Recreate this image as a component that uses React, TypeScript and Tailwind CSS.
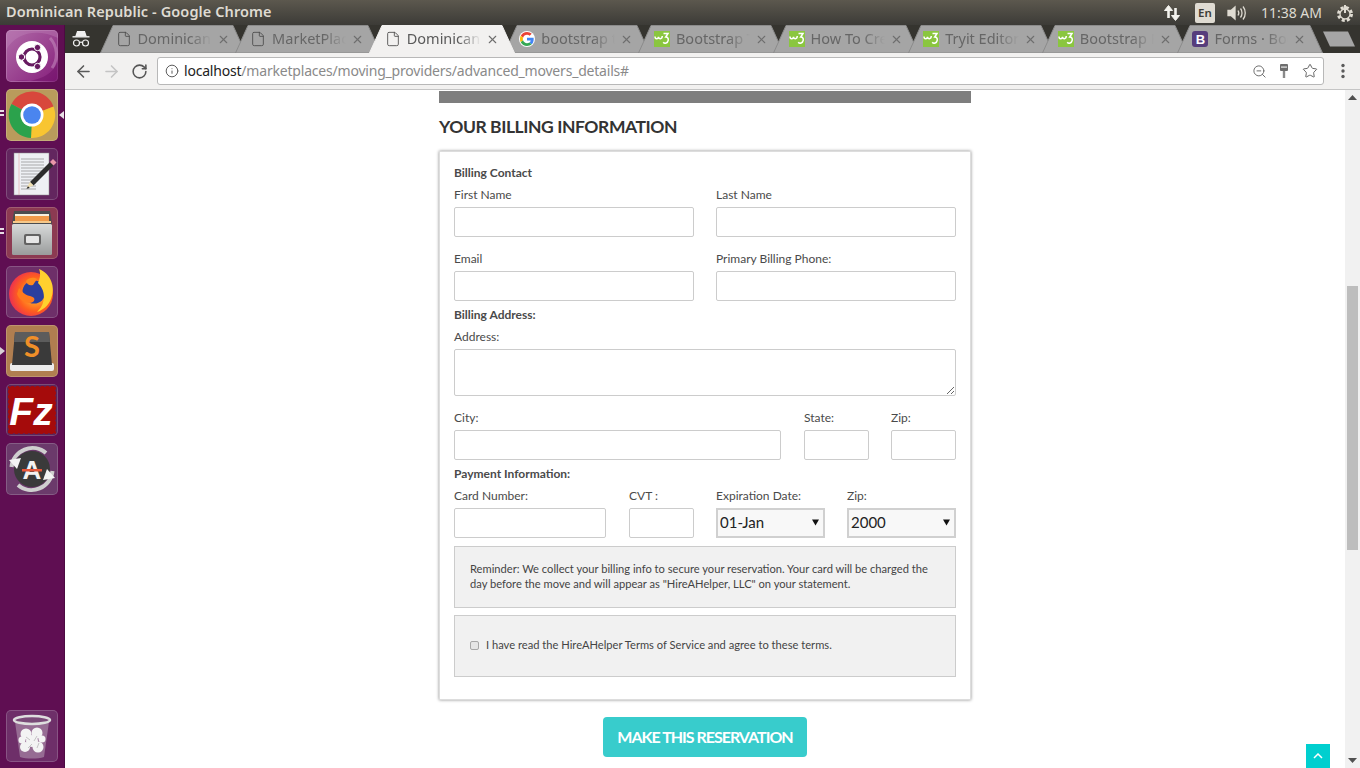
import React from "react";
import { ArrowLeft, ArrowRight, RotateCw, Info, ZoomOut, Star, X, File } from "lucide-react";

const uiFont = "font-['Noto_Sans','Open_Sans',sans-serif]";

function GoogleG() {
  return (
    <span className="w-4 h-4 rounded-full bg-white flex items-center justify-center shrink-0">
      <svg viewBox="0 0 48 48" width="14" height="14">
        <path fill="#EA4335" d="M24 9.500c3.500 0 6.700 1.200 9.200 3.600l6.900-6.900C35.900 2.400 30.400 0 24 0 14.600 0 6.500 5.400 2.600 13.200l8 6.200C12.500 13.700 17.800 9.500 24 9.500z" />
        <path fill="#4285F4" d="M46.900 24.500c0-1.600-.1-3.100-.4-4.500H24v9h12.900c-.6 3-2.200 5.500-4.700 7.200l7.700 6c4.500-4.200 7-10.300 7-17.700z" />
        <path fill="#FBBC05" d="M10.500 28.600c-.5-1.500-.8-3-.8-4.600s.3-3.200.8-4.600l-8-6.200C.9 16.500 0 20.100 0 24s.9 7.500 2.600 10.800l7.900-6.200z" />
        <path fill="#34A853" d="M24 48c6.500 0 11.900-2.100 15.900-5.800l-7.700-6c-2.100 1.400-4.900 2.300-8.200 2.300-6.200 0-11.500-4.200-13.400-9.900l-8 6.200C6.500 42.600 14.600 48 24 48z" />
      </svg>
    </span>
  );
}

function W3Icon() {
  return (
    <span className="w-4 h-4 bg-[#8ac63f] flex items-center justify-center shrink-0">
      <svg viewBox="0 0 16 16" width="16" height="16" fill="none" stroke="#fff" strokeWidth="1.500">
        <path d="M1 5.500c0 3 3.200 3 3.500 .3.300 2.700 3.500 2.700 3.800 -.8" />
        <path d="M9.500 2.500h4.500l-2.300 3.500c2.300 0 2.800 1.700 2.500 3.300-.5 2.700-3.500 3.700-5 1.900" />
      </svg>
    </span>
  );
}

function BootIcon() {
  return (
    <span className="w-4 h-4 rounded-[3px] bg-[#563d7c] flex items-center justify-center shrink-0 text-white text-[13px] font-bold leading-none font-['Liberation_Sans',sans-serif]">
      B
    </span>
  );
}

function DocIcon() {
  return <File size={16} strokeWidth={1.300} className="text-[#4a4a4a] shrink-0" />;
}

type TabData = { title: string; icon: React.ReactNode; active?: boolean };
const tabs: TabData[] = [
  { title: "Dominican Republic", icon: <DocIcon /> },
  { title: "MarketPlaces", icon: <DocIcon /> },
  { title: "Dominican Republic", icon: <DocIcon />, active: true },
  { title: "bootstrap tutorial", icon: <GoogleG /> },
  { title: "Bootstrap Tutorial", icon: <W3Icon /> },
  { title: "How To Create", icon: <W3Icon /> },
  { title: "Tryit Editor v3.5", icon: <W3Icon /> },
  { title: "Bootstrap Forms", icon: <W3Icon /> },
  { title: "Forms · Bootstrap", icon: <BootIcon /> },
];

function Tab({ title, icon, active }: TabData) {
  return (
    <div className={`relative w-[146px] h-[28px] -mr-[11.400px] shrink-0 ${active ? "z-10" : ""}`}>
      <svg className="absolute inset-0" width="146" height="28">
        <polygon
          points="0.5,28 13,0.5 133,0.5 145.500,28"
          fill={active ? "#f2f1f0" : "#a5a5a5"}
          stroke={active ? "#f2f1f0" : "#8b8b8b"}
        />
      </svg>
      <div className="relative h-full flex items-center pl-[15.500px]">
        {icon}
        <span
          className={`ml-[6px] w-[74px] whitespace-nowrap overflow-hidden text-[14.500px] [mask-image:linear-gradient(to_right,black_70%,transparent)] ${
            active ? "text-[#5a5a5a]" : "text-[#666666]"
          }`}
        >
          {title}
        </span>
        <X size={13} strokeWidth={2} className="ml-[5px] text-[#6e6e6e] shrink-0" />
      </div>
    </div>
  );
}

function Tile({ bg, children, left, right }: { bg: string; children: React.ReactNode; left?: "pips" | "arrow"; right?: boolean }) {
  return (
    <div className={`relative w-[52px] h-[52px] rounded-[5px] ${bg} shadow-[inset_0_0_0_1px_rgba(255,255,255,0.18)]`}>
      <svg viewBox="0 0 52 52" width="52" height="52" className="absolute inset-0 rounded-[5px]">
        {children}
      </svg>
      {left === "pips" && (
        <div className="absolute left-[-6px] top-[21px] flex flex-col gap-[2px]">
          <span className="w-[4px] h-[2px] bg-[#e8e0e6]" />
          <span className="w-[4px] h-[2px] bg-[#e8e0e6]" />
        </div>
      )}
      {left === "arrow" && (
        <svg className="absolute left-[-6px] top-[22px]" width="5" height="8" viewBox="0 0 5 8">
          <polygon points="0,0 5,4 0,8" fill="#d8d0d6" />
        </svg>
      )}
      {right && (
        <svg className="absolute left-[53px] top-[22px]" width="5" height="8" viewBox="0 0 5 8">
          <polygon points="5,0 0,4 5,8" fill="#e8e0e6" />
        </svg>
      )}
    </div>
  );
}

function Launcher() {
  return (
    <aside className="w-[65px] shrink-0 h-full bg-[#5f0e52] border-r border-[#4c0a42] flex flex-col items-start pl-[6px] pt-[5px]">
      <div className="flex flex-col gap-[7px]">
        <Tile bg="bg-gradient-to-br from-[#b06aa8] to-[#861a7c]">
          <path d="M0 20C10 2 32-2 52 8V0H0Z" fill="#c48abc" opacity=".35" />
          <path d="M52 30C48 46 28 54 8 50l44 2Z" fill="#6e0f66" opacity=".5" />
          <path d="M44 8a24 24 0 0 1 2 30" fill="none" stroke="#d0a0ca" strokeWidth="3" opacity=".45" />
          <circle cx="26" cy="27" r="16" fill="#fff" />
          <circle cx="26" cy="27" r="8" fill="none" stroke="#671a60" strokeWidth="3.200" />
          <circle cx="15.500" cy="27" r="3.200" fill="#671a60" stroke="#fff" strokeWidth="1" />
          <circle cx="31.500" cy="17.500" r="3.200" fill="#671a60" stroke="#fff" strokeWidth="1" />
          <circle cx="31.500" cy="36.500" r="3.200" fill="#671a60" stroke="#fff" strokeWidth="1" />
        </Tile>
        <Tile bg="bg-[#b99b5c]" left="pips" right>
          <path d="M5.500 15A23 23 0 0 1 47.500 17.500L26 26Z" fill="#d8483c" />
          <path d="M47.500 17.500A23 23 0 0 1 25 49L26 26Z" fill="#f8c531" />
          <path d="M25 49A23 23 0 0 1 5.500 15L26 26Z" fill="#2ba24c" />
          <circle cx="26" cy="26" r="11.500" fill="#fff" />
          <circle cx="26" cy="26" r="8.800" fill="#4a85ef" />
        </Tile>
        <Tile bg="bg-[#63265f]">
          <rect x="8" y="5" width="35" height="42" fill="#eef0f4" stroke="#8a8a8a" strokeWidth=".5" />
          <line x1="13" y1="5" x2="13" y2="47" stroke="#e3a4a4" strokeWidth=".6" />
          {[11, 14, 17, 20, 23, 26, 29, 32, 35, 38, 41].map((y) => (
            <line key={y} x1="15" y1={y} x2={y > 26 ? 30 : 38} y2={y} stroke="#8a8a8a" strokeWidth=".7" />
          ))}
          <path d="M44 14l3.500 3.500-20 20-3.500-3.500Z" fill="#2c2c2c" />
          <path d="M44 14l3-3 3.500 3.500-3 3Z" fill="#e896a8" />
          <path d="M24 34l3.500 3.500-7 2.500Z" fill="#f0e0b0" />
          <path d="M22 38.200l1.800 1.800-3.300 .8Z" fill="#222" />
        </Tile>
        <Tile bg="bg-[#8c3a52]" left="pips">
          <path d="M8 4h36l2 13H6Z" fill="#4a4c4f" />
          <rect x="9" y="7" width="34" height="2" fill="#f4f0e0" />
          <rect x="9" y="9" width="34" height="5" fill="#ef9a4a" />
          <rect x="7" y="14" width="38" height="2" fill="#f5c88a" />
          <defs>
            <linearGradient id="cab" x1="0" y1="0" x2="0" y2="1">
              <stop offset="0" stopColor="#d8dada" />
              <stop offset="1" stopColor="#9a9c9c" />
            </linearGradient>
          </defs>
          <rect x="6" y="17" width="40" height="31" rx="1.500" fill="url(#cab)" />
          <rect x="18" y="27" width="17" height="11" rx="2" fill="#636363" />
          <rect x="20" y="29" width="13" height="7" rx="1" fill="#e6e6e6" />
        </Tile>
        <Tile bg="bg-[#6e2f69]">
          <defs>
            <radialGradient id="ff" cx="0.6" cy="0.5" r="0.65">
              <stop offset="0.1" stopColor="#ffc22e" />
              <stop offset="0.6" stopColor="#ff5f1e" />
              <stop offset="1" stopColor="#e8245c" />
            </radialGradient>
          </defs>
          <circle cx="25" cy="28" r="22" fill="url(#ff)" />
          <circle cx="28" cy="26" r="11.500" fill="#2b3f9e" />
          <path d="M33 3c12 5 17 18 12 30-3 7-8 11-14 13 8-7 10-20 1-29 2-5 3-9 1-14Z" fill="#ffd12e" />
          <path d="M13 22c3 3 5 7 11 8 4 1 6 3 3 6-6 3-14-2-16-8Z" fill="#ff7a1e" />
          <path d="M20 15c3-4 8-4 11-2l-4 6c-3 1-6 0-7-4Z" fill="#ff8a1e" />
        </Tile>
        <Tile bg="bg-[#b07e50]" left="arrow">
          <rect x="4" y="38" width="44" height="8" rx="2" fill="#ececec" />
          <path d="M9 7h34l3 33H6Z" fill="#3a3a3a" />
          <path d="M9 7h34l1 10H8Z" fill="#5c5c5c" />
          <text x="26" y="32" textAnchor="middle" fontFamily="Lato, sans-serif" fontSize="29" fontWeight="700" fill="#f08f28">S</text>
        </Tile>
        <Tile bg="bg-[#5c2559]">
          <rect x="2" y="2" width="48" height="48" rx="1" fill="#a50b0b" />
          <rect x="2" y="2" width="48" height="48" rx="1" fill="none" stroke="#5c2559" strokeWidth="1.500" strokeDasharray="2 3" />
          <text x="25" y="41" textAnchor="middle" fontFamily="Liberation Sans, sans-serif" fontSize="39" fontStyle="italic" fontWeight="700" fill="#fff">Fz</text>
        </Tile>
        <Tile bg="bg-[#6b3a6b]">
          <path d="M5.500 24A21 21 0 0 1 40 10" fill="none" stroke="#cfcfcf" strokeWidth="4" />
          <path d="M46.500 28A21 21 0 0 1 12 42" fill="none" stroke="#cfcfcf" strokeWidth="4" />
          <circle cx="26" cy="26" r="18" fill="#3a3a3a" />
          <text x="26" y="36" textAnchor="middle" fontFamily="Liberation Sans, sans-serif" fontSize="26" fontWeight="700" fill="#f2f2f2">A</text>
          <rect x="16" y="26" width="20" height="2.500" fill="#e8563a" />
          <path d="M3 17l12-2-4 11Z" fill="#f4f4f4" />
          <path d="M49 35l-12 2 4-11Z" fill="#f4f4f4" />
        </Tile>
      </div>
      <div className="mt-auto mb-[6px]">
        <Tile bg="bg-[#6e2f69]">
          <path d="M9 12l5 35c6 2 18 2 24 0l5-35Z" fill="#a07c9e" opacity=".8" />
          <ellipse cx="26" cy="10" rx="18" ry="4" fill="#7a4a78" stroke="#dedede" strokeWidth="2.500" />
          <g fill="#f3f3f3">
            <circle cx="20" cy="24" r="5.500" />
            <circle cx="31" cy="23" r="5.500" />
            <circle cx="26" cy="31" r="6" />
            <circle cx="19" cy="37" r="5" />
            <circle cx="32" cy="37" r="5.500" />
            <circle cx="36" cy="29" r="3.500" />
            <circle cx="16" cy="30" r="3.500" />
          </g>
          <path d="M20 27l4 3M31 26l-3 5M22 38l4-4M33 33l-2 5" stroke="#c4c4c4" strokeWidth="1" fill="none" />
        </Tile>
      </div>
    </aside>
  );
}

function TopPanel() {
  return (
    <header className="h-[25px] shrink-0 bg-gradient-to-b from-[#5c584e] to-[#3c3b37] flex items-center pl-[6px] pr-[5px]">
      <span className="-mt-[1px] text-[14.500px] font-semibold tracking-[0.1px] text-[#dfdbd2] whitespace-nowrap">Dominican Republic - Google Chrome</span>
      <div className="ml-auto flex items-center text-[#dfdbd2]">
        <svg width="18" height="18" viewBox="0 0 18 18" fill="none" stroke="#f4f3ee" strokeWidth="2.600">
          <path d="M5.500 14V3" />
          <path d="M1.500 6.500L5.500 1.500l4 5Z" fill="#f4f3ee" strokeWidth="1" />
          <path d="M12.500 4v11" />
          <path d="M8.500 11.500l4 5 4-5Z" fill="#f4f3ee" strokeWidth="1" />
        </svg>
        <span className="ml-[14px] w-[20px] h-[20px] rounded-[2px] bg-[#dfdbd2] text-[#3c3b37] text-[11.500px] font-semibold flex items-center justify-center">En</span>
        <svg className="ml-[12px]" width="20" height="16" viewBox="0 0 20 16" fill="none" stroke="#dfdbd2" strokeWidth="1.300">
          <path d="M1 5.500h3L8 2v12l-4-3.500H1Z" fill="#dfdbd2" />
          <path d="M11 5.500c1 1.500 1 3.500 0 5M13.500 3.500c2 2.500 2 6.500 0 9M16 1.500c3 3.500 3 9.500 0 13" />
        </svg>
        <span className="ml-[14px] text-[14px] whitespace-nowrap">11:38 AM</span>
        <svg className="ml-[13px]" width="20" height="20" viewBox="0 0 20 20" fill="none" stroke="#dfdbd2">
          <circle cx="10" cy="11" r="6.500" strokeDasharray="3 2.100" strokeWidth="3" />
          <circle cx="10" cy="11" r="5" strokeWidth="1.300" />
          <path d="M10 2v8" strokeWidth="2" />
        </svg>
      </div>
    </header>
  );
}

function Incognito() {
  return (
    <svg width="20" height="18" viewBox="0 0 20 18" className="shrink-0" fill="none" stroke="#f0f0f0" strokeWidth="1.200">
      <path d="M5 6l1.500-4.500h7L15 6Z" fill="#f0f0f0" />
      <path d="M1.500 6.800h17" strokeWidth="1.400" />
      <circle cx="5.500" cy="13" r="3" />
      <circle cx="14.500" cy="13" r="3" />
      <path d="M8.500 12.500c1-.6 2-.6 3 0" />
    </svg>
  );
}

function TabStrip() {
  return (
    <div className="h-[28px] shrink-0 bg-[#35342f] flex items-end relative overflow-hidden">
      <div className="w-[35px] shrink-0 h-full flex items-center pl-[6px]">
        <Incognito />
      </div>
      {tabs.map((t, i) => (
        <Tab key={i} {...t} />
      ))}
      <svg className="ml-[12px] shrink-0 mb-[6px]" width="32" height="16" viewBox="0 0 32 16">
        <polygon points="0,0.5 25,0.5 32,15.500 7,15.500" fill="#a5a5a5" />
      </svg>
    </div>
  );
}

function Toolbar() {
  return (
    <div className="h-[37px] shrink-0 bg-[#f2f1f0] border-b border-[#c5c5c5] flex items-center">
      <ArrowLeft size={19} strokeWidth={2} className="ml-[9px] text-[#5a5a5a] shrink-0" />
      <ArrowRight size={19} strokeWidth={2} className="ml-[9px] text-[#c4c4c4] shrink-0" />
      <RotateCw size={17} strokeWidth={2.200} className="ml-[10px] text-[#555555] shrink-0" />
      <div className="ml-[9px] w-[1167px] h-[28px] rounded-[3px] bg-white border border-[#b8b8b8] flex items-center shrink-0">
        <Info size={14} strokeWidth={1.700} className="ml-[7px] text-[#5a5a5a] shrink-0" />
        <span className="ml-[5px] -mt-[1px] text-[14px] tracking-[-0.2px] whitespace-nowrap text-[#8a8a8a]">
          <span className="text-[#222222]">localhost</span>/marketplaces/moving_providers/advanced_movers_details#
        </span>
        <div className="ml-auto flex items-center pr-[5px]">
          <ZoomOut size={15} strokeWidth={1.500} className="text-[#666666]" />
          <svg className="ml-[11px]" width="12" height="16" viewBox="0 0 12 16">
            <rect x="2" y="1" width="8" height="7" rx="1" fill="#6e6e6e" />
            <rect x="4.800" y="8" width="2.400" height="7" fill="#8a8a8a" />
            <rect x="3" y="3.500" width="6" height="1.200" fill="#e8e8e8" />
          </svg>
          <Star size={16} strokeWidth={1.500} className="ml-[12px] text-[#666666]" />
        </div>
      </div>
      <svg className="ml-[17px]" width="4" height="16" viewBox="0 0 4 16" fill="#5a5a5a">
        <circle cx="2" cy="2.500" r="1.700" />
        <circle cx="2" cy="8" r="1.700" />
        <circle cx="2" cy="13.500" r="1.700" />
      </svg>
    </div>
  );
}

const labelCls = "block h-[22px] mb-[1px] leading-[22px] text-[12px] text-[#4a4a4a] whitespace-nowrap";
const headCls = "h-[22px] leading-[22px] text-[12px] font-bold text-[#4a4a4a] whitespace-nowrap";
const inputCls = "block w-full h-[30px] bg-white border border-[#cccccc] rounded-[2px]";
const selectCls = "block w-full h-[30px] appearance-none bg-[#f8f8f8] border-2 border-[#d0d0d0] text-[15px] text-[#222222] pl-[2px] pb-[1px]";

function Field({ label, w, children }: { label: string; w: string; children?: React.ReactNode }) {
  return (
    <div className={`${w} shrink-0`}>
      <span className={labelCls}>{label}</span>
      {children ?? <input className={inputCls} />}
    </div>
  );
}

function Select({ value }: { value: string }) {
  return (
    <div className="relative">
      <select className={selectCls} defaultValue={value}>
        <option>{value}</option>
      </select>
      <svg className="absolute right-[6px] top-[11px] pointer-events-none" width="7" height="7" viewBox="0 0 7 7">
        <polygon points="0,0.5 7,0.5 3.500,6.500" fill="#111111" />
      </svg>
    </div>
  );
}

function Card() {
  return (
    <div className="w-[532px] h-[549px] bg-white border border-[#dddddd] shadow-[0_0_3px_rgba(0,0,0,0.45)] pt-[10px] px-[14px]">
      <div className={headCls}>Billing Contact</div>
      <div className="flex gap-[22px]">
        <Field label="First Name" w="w-[240px]" />
        <Field label="Last Name" w="w-[240px]" />
      </div>
      <div className="flex gap-[22px] mt-[11px]">
        <Field label="Email" w="w-[240px]" />
        <Field label="Primary Billing Phone:" w="w-[240px]" />
      </div>
      <div className={`${headCls} mt-[3px]`}>Billing Address:</div>
      <Field label="Address:" w="w-full">
        <textarea className="block w-full h-[47px] bg-white border border-[#cccccc] rounded-[2px]" />
      </Field>
      <div className="flex gap-[22px] mt-[11px]">
        <Field label="City:" w="w-[327px] mr-[1px]" />
        <Field label="State:" w="w-[65px]" />
        <Field label="Zip:" w="w-[65px]" />
      </div>
      <div className={`${headCls} mt-[3px]`}>Payment Information:</div>
      <div className="flex gap-[22px]">
        <Field label="Card Number:" w="w-[152px] mr-[1px]" />
        <Field label="CVT :" w="w-[65px]" />
        <Field label="Expiration Date:" w="w-[109px]">
          <Select value="01-Jan" />
        </Field>
        <Field label="Zip:" w="w-[109px]">
          <Select value="2000" />
        </Field>
      </div>
      <div className="mt-[8px] h-[62px] bg-[#f1f1f1] border border-[#cccccc] flex items-center pl-[15px] pr-[15px] pb-[2px]">
        <p className="text-[11.150px] leading-[15px] text-[#444444]">
          Reminder: We collect your billing info to secure your reservation. Your card will be charged the day before the move and will appear as "HireAHelper, LLC" on your statement.
        </p>
      </div>
      <div className="mt-[7px] h-[62px] bg-[#f1f1f1] border border-[#cccccc] flex items-center pl-[15px] pb-[2px]">
        <span className="w-[9px] h-[9px] rounded-[2px] border border-[#a8a8a8] bg-[#e6e6e6] shrink-0" />
        <span className="ml-[7px] text-[11.150px] text-[#444444] whitespace-nowrap">
          I have read the HireAHelper Terms of Service and agree to these terms.
        </span>
      </div>
    </div>
  );
}

function Scrollbar() {
  return (
    <div className="w-[15px] shrink-0 h-full bg-[#f1f1f1] flex flex-col items-center">
      <svg className="mt-[5px] shrink-0" width="9" height="5" viewBox="0 0 9 5"><polygon points="4.500,0 9,5 0,5" fill="#505050" /></svg>
      <div className="w-[11px] h-[264px] bg-[#bdbdbd] mt-[186px] shrink-0" />
      <svg className="mt-auto mb-[5px] shrink-0" width="9" height="5" viewBox="0 0 9 5"><polygon points="0,0 9,0 4.500,5" fill="#505050" /></svg>
    </div>
  );
}

export default function App() {
  return (
    <div className={`w-[1360px] h-[768px] overflow-hidden flex flex-col ${uiFont}`}>
      <TopPanel />
      <div className="flex-1 min-h-0 flex">
        <Launcher />
        <div className="flex-1 min-w-0 flex flex-col">
          <TabStrip />
          <Toolbar />
          <div className="flex-1 min-h-0 flex bg-white">
            <main className="flex-1 min-w-0 relative font-['Lato',sans-serif]">
              <div className="ml-[374px] w-[532px] h-[12px] bg-[#7e7e7e] mt-[1px]" />
              <h2 className="ml-[374px] mt-[12px] h-[24px] leading-[24px] text-[17.500px] tracking-[-0.43px] font-bold text-[#333333] whitespace-nowrap">
                YOUR BILLING INFORMATION
              </h2>
              <div className="ml-[374px] mt-[12px]">
                <Card />
              </div>
              <div className="ml-[538px] mt-[17px] w-[204px] h-[40px] rounded-[4px] bg-[#38cccc] flex items-center justify-center text-[16px] tracking-[-1px] font-bold text-white whitespace-nowrap">
                MAKE THIS RESERVATION
              </div>
              <div className="absolute left-[1241px] top-[654px] w-[24px] h-[24px] bg-[#00cfcf] flex items-center justify-center">
                <svg width="10" height="6" viewBox="0 0 10 6" fill="none" stroke="#fff" strokeWidth="1.500"><path d="M1 5l4-4 4 4" /></svg>
              </div>
            </main>
            <Scrollbar />
          </div>
        </div>
      </div>
    </div>
  );
}
